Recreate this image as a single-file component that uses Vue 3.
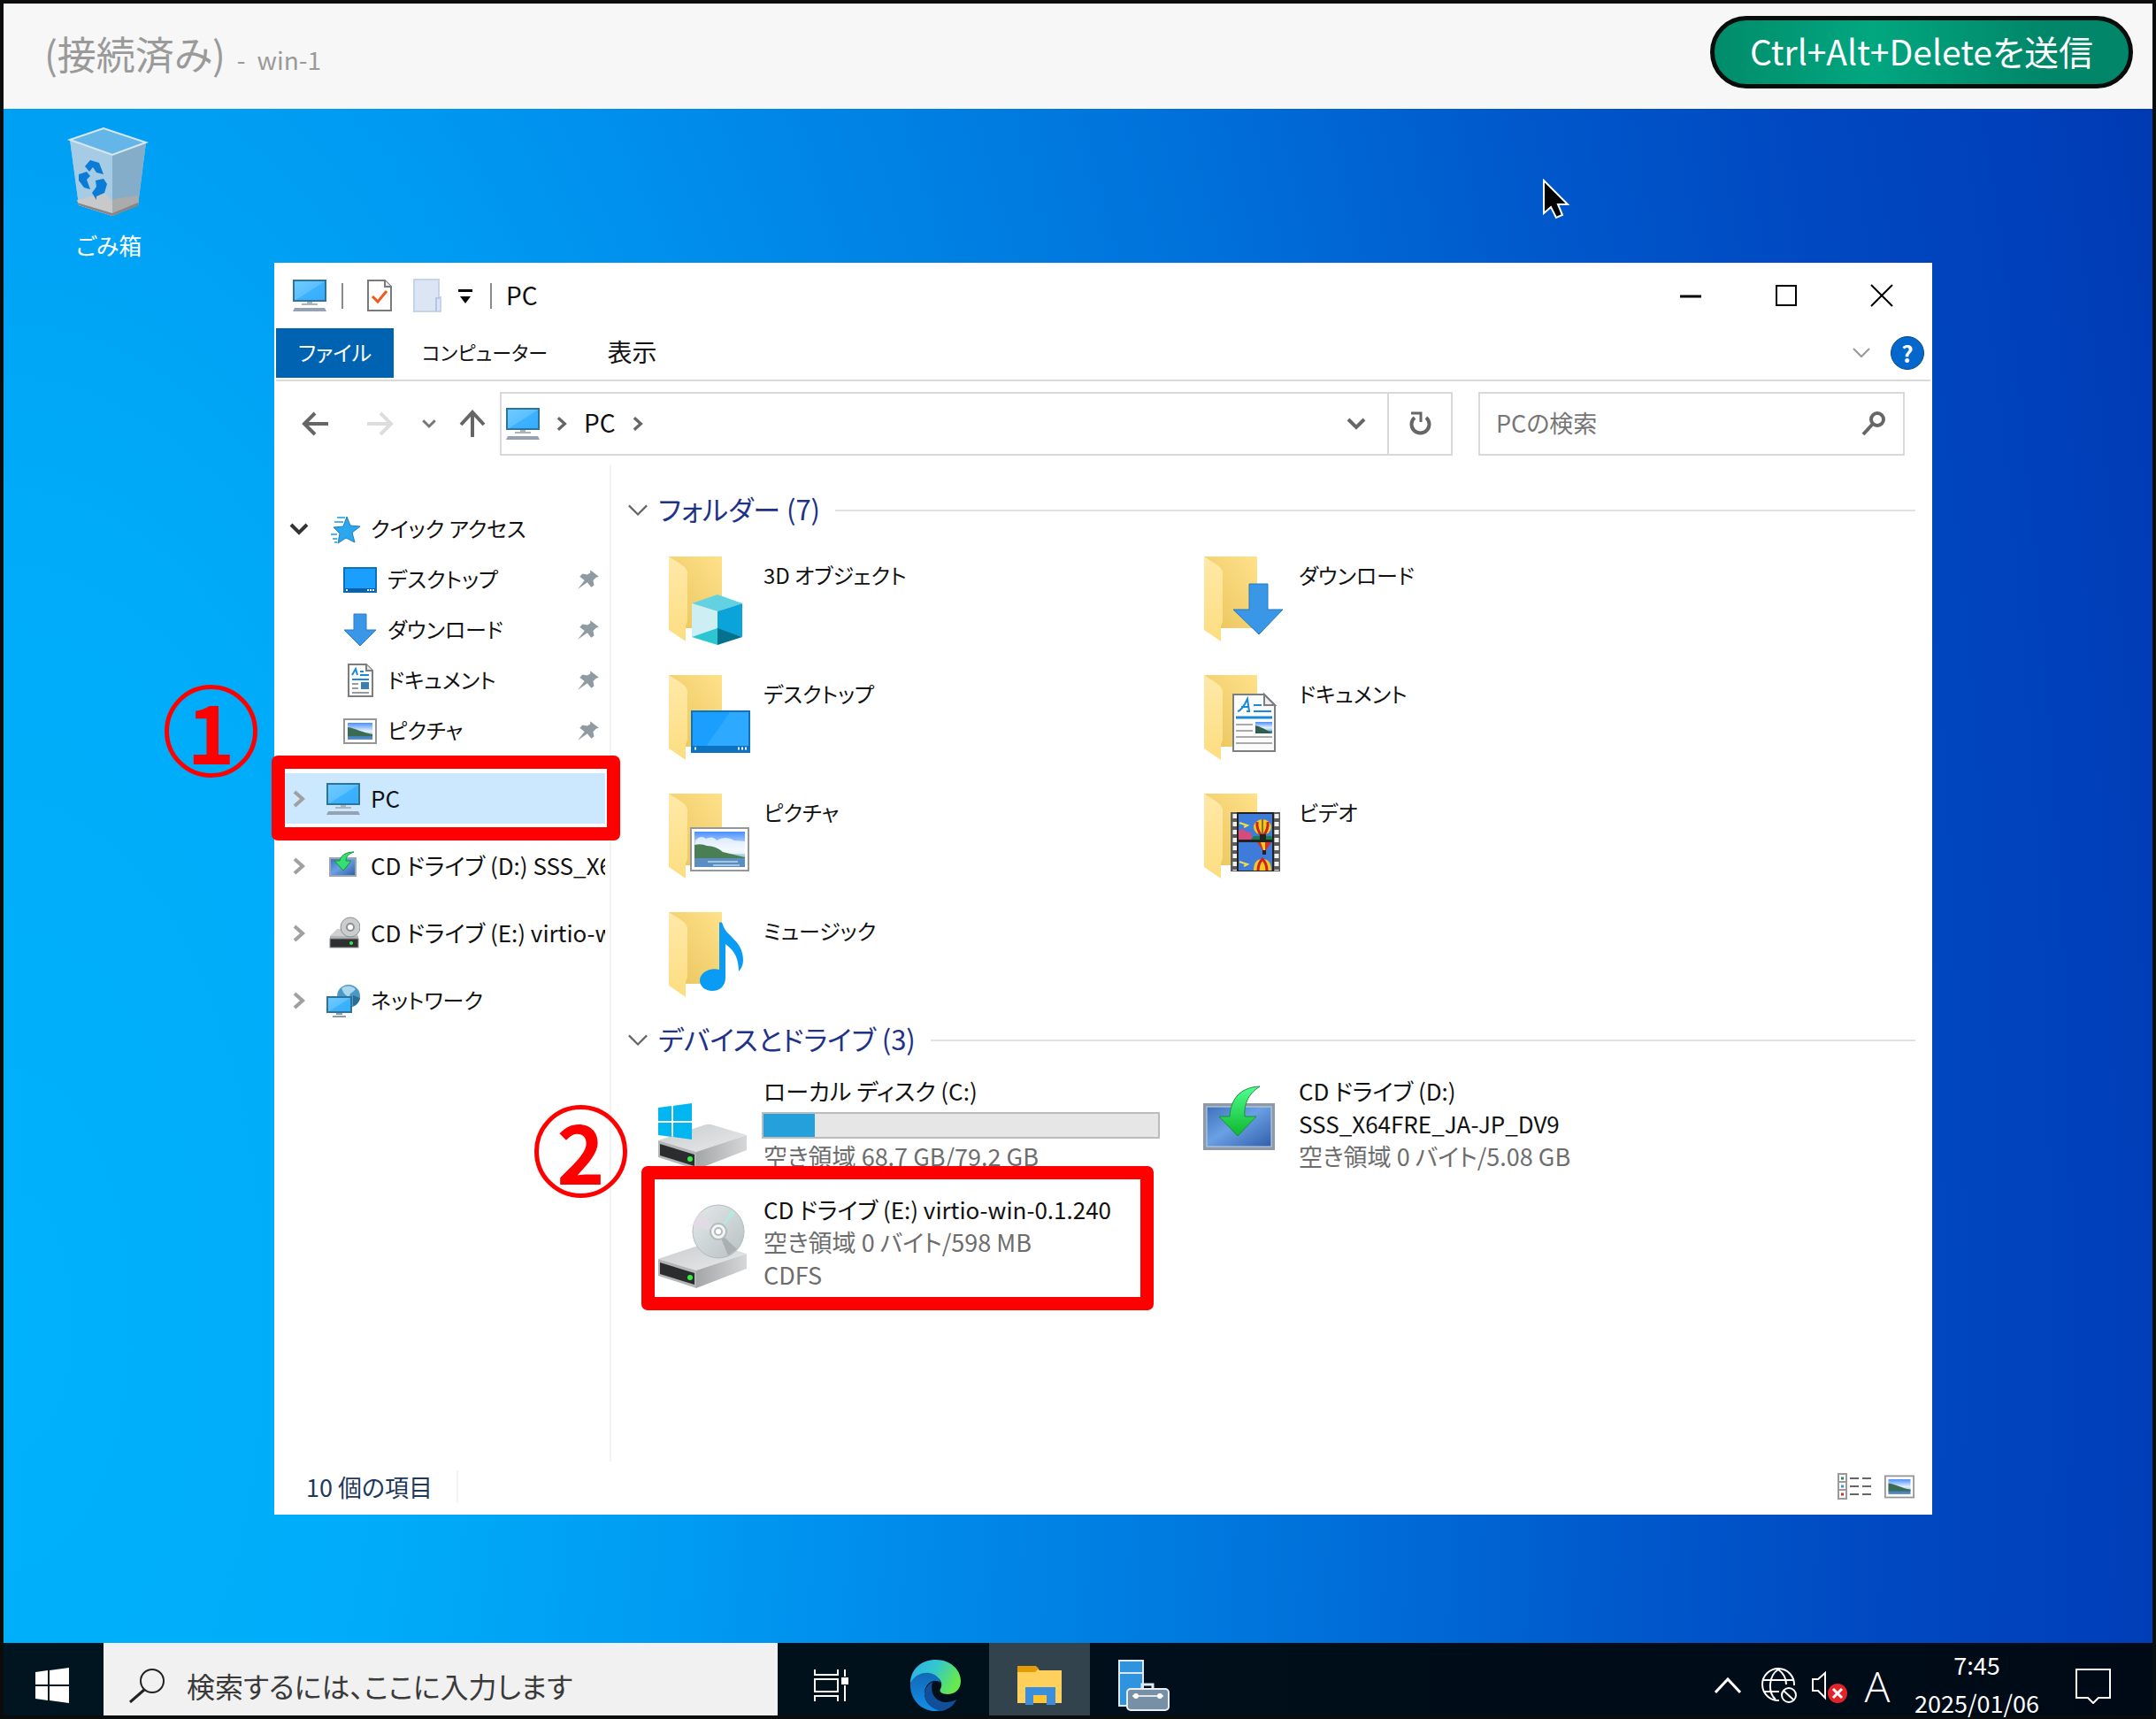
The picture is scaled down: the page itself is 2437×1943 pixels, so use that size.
<script setup>
const quickItems = [
  { label: 'デスクトップ', icon: 'i-desktop' },
  { label: 'ダウンロード', icon: 'i-download' },
  { label: 'ドキュメント', icon: 'i-document' },
  { label: 'ピクチャ', icon: 'i-picture' },
]

const treeItems = [
  { label: 'PC', icon: 'i-pc', selected: true },
  { label: 'CD ドライブ (D:) SSS_X64FRE_JA-JP_DV9', icon: 'i-setup' },
  { label: 'CD ドライブ (E:) virtio-win-0.1.240', icon: 'i-cd' },
  { label: 'ネットワーク', icon: 'i-network', kana: true },
]

const folders = [
  { label: '3D オブジェクト', icon: 'f-3d' },
  { label: 'ダウンロード', icon: 'f-download' },
  { label: 'デスクトップ', icon: 'f-desktop' },
  { label: 'ドキュメント', icon: 'f-document' },
  { label: 'ピクチャ', icon: 'f-picture' },
  { label: 'ビデオ', icon: 'f-video' },
  { label: 'ミュージック', icon: 'f-music' },
]

const drives = [
  { lines: ['ローカル ディスク (C:)'], used: 13, info: ['空き領域 68.7 GB/79.2 GB'], icon: 'd-local' },
  { lines: ['CD ドライブ (D:)', 'SSS_X64FRE_JA-JP_DV9'], info: ['空き領域 0 バイト/5.08 GB'], icon: 'd-setup' },
  { lines: ['CD ドライブ (E:) virtio-win-0.1.240'], info: ['空き領域 0 バイト/598 MB', 'CDFS'], icon: 'd-cd', step: 2 },
]
</script>

<template>
  <div class="console">
    <svg class="defs" width="0" height="0" aria-hidden="true">
      <defs>
        <linearGradient id="g-screen" x1="0" y1="0" x2="1" y2="1">
          <stop offset="0" stop-color="#6fcbff" />
          <stop offset="0.5" stop-color="#5cc0ff" />
          <stop offset="0.52" stop-color="#3db2ff" />
          <stop offset="1" stop-color="#35adfc" />
        </linearGradient>
        <linearGradient id="g-back" x1="0" y1="1" x2="1" y2="0">
          <stop offset="0" stop-color="#e9c45c" />
          <stop offset="1" stop-color="#ffe18a" />
        </linearGradient>
        <linearGradient id="g-flap" x1="0" y1="0" x2="0" y2="1">
          <stop offset="0" stop-color="#ffe9a8" />
          <stop offset="1" stop-color="#fcdd80" />
        </linearGradient>
        <linearGradient id="g-sky" x1="0" y1="0" x2="0" y2="1">
          <stop offset="0" stop-color="#4a8fff" />
          <stop offset="0.5" stop-color="#e4f1fc" />
          <stop offset="0.75" stop-color="#8fc0e0" />
          <stop offset="0.78" stop-color="#3f7ab5" />
          <stop offset="1" stop-color="#5f93c4" />
        </linearGradient>
        <linearGradient id="g-top" x1="0" y1="0" x2="1" y2="1">
          <stop offset="0" stop-color="#c9cbcc" />
          <stop offset="1" stop-color="#e9eaeb" />
        </linearGradient>
        <linearGradient id="g-side" x1="0" y1="0" x2="1" y2="0">
          <stop offset="0" stop-color="#a4a6a8" />
          <stop offset="1" stop-color="#d6d7d8" />
        </linearGradient>
        <linearGradient id="g-disc" x1="0" y1="0" x2="1" y2="1">
          <stop offset="0" stop-color="#e6eaea" />
          <stop offset="0.5" stop-color="#cdd5d6" />
          <stop offset="1" stop-color="#b9c0c2" />
        </linearGradient>
        <linearGradient id="g-blue" x1="0" y1="0" x2="1" y2="1">
          <stop offset="0" stop-color="#3a6fb8" />
          <stop offset="0.45" stop-color="#6aa0e4" />
          <stop offset="1" stop-color="#2d5aa8" />
        </linearGradient>
        <linearGradient id="g-green" x1="0" y1="0" x2="0" y2="1">
          <stop offset="0" stop-color="#4fff90" />
          <stop offset="1" stop-color="#0fb62c" />
        </linearGradient>
        <linearGradient id="g-edge1" x1="0" y1="0" x2="1" y2="0.4">
          <stop offset="0" stop-color="#2ab0ea" />
          <stop offset="0.5" stop-color="#33c7cf" />
          <stop offset="1" stop-color="#66e84f" />
        </linearGradient>
        <linearGradient id="g-edge2" x1="0" y1="0" x2="0" y2="1">
          <stop offset="0" stop-color="#1268b8" />
          <stop offset="1" stop-color="#128fe6" />
        </linearGradient>
      </defs>

      <symbol id="i-pc" viewBox="0 0 38 38">
        <rect x="1" y="2" width="36" height="23" fill="url(#g-screen)" stroke="#2f7399" stroke-width="2" />
        <path d="M16 26h6v2h6v2H10v-2h6z" fill="#a9b4bd" />
        <path d="M2 33h34l2 4H0z" fill="#94a2b3" />
      </symbol>
      <symbol id="i-star" viewBox="0 0 38 38">
        <path d="M23 5l4 10 11 1-9 7 3 11-10-5-9 6 2-11-7-7 11-1z" fill="#2ba6ef" stroke="#1c7fc0" stroke-width="1" />
        <path d="M12 6h9M9 11h10M5 25h7M7 30h5M9 34h3" stroke="#4fb4ee" stroke-width="2" />
      </symbol>
      <symbol id="i-desktop" viewBox="0 0 38 38">
        <rect x="1" y="6" width="36" height="27" fill="#1a9fff" stroke="#0c70bd" stroke-width="2" />
        <path d="M2 31h34" stroke="#0a5fa6" stroke-width="4" />
        <path d="M3 31h2M27 31h2M30 31h2M33 31h2" stroke="#fff" stroke-width="2" />
      </symbol>
      <symbol id="i-download" viewBox="0 0 38 38">
        <path d="M12 1h14v18h11L19 37 1 19h11z" fill="#3a97e8" stroke="#2c7dc4" stroke-width="1" />
      </symbol>
      <symbol id="i-document" viewBox="0 0 38 38">
        <path d="M6 1h20l7 7v29H6z" fill="#fff" stroke="#7d7d7d" stroke-width="2" />
        <path d="M26 1v7h7" fill="#e8e8e8" stroke="#7d7d7d" stroke-width="2" />
        <path d="M10 13l4-7 2 7M19 9h4M19 13h10M10 18h19" stroke="#1a8ad8" stroke-width="2" fill="none" />
        <path d="M10 23h7M10 28h7M10 33h19" stroke="#9a9a9a" stroke-width="2" />
        <rect x="20" y="21" width="9" height="8" fill="#3d7fae" />
      </symbol>
      <symbol id="i-picture" viewBox="0 0 38 38">
        <rect x="1" y="6" width="36" height="27" fill="#fff" stroke="#969696" stroke-width="2" />
        <rect x="5" y="10" width="28" height="19" fill="url(#g-sky)" />
        <path d="M5 15c9 1 16 6 28 8v2H5z" fill="#3c6b52" />
      </symbol>
      <symbol id="i-setup" viewBox="0 0 38 38">
        <rect x="4" y="10" width="29" height="20" fill="url(#g-blue)" stroke="#9aa6b5" stroke-width="2" />
        <path d="M31 3C22 3 16 7 15 13h-6l10 11 9-11h-6c0-5 3-8 9-10z" fill="#33e070" stroke="#15933a" stroke-width="1" />
      </symbol>
      <symbol id="i-cd" viewBox="0 0 38 38">
        <path d="M4 22l8-8h20l4 8z" fill="#cfd0d1" />
        <path d="M4 22h32v4H4z" fill="#b5b6b7" />
        <rect x="4" y="25" width="32" height="10" fill="#2f3031" stroke="#8a8a8a" stroke-width="1" />
        <circle cx="28" cy="30" r="2" fill="#2ff04a" />
        <ellipse cx="27" cy="12" rx="11" ry="11" fill="#cacdce" stroke="#8d9091" stroke-width="1" />
        <circle cx="27" cy="12" r="4" fill="#fff" stroke="#8d9091" stroke-width="2" />
      </symbol>
      <symbol id="i-network" viewBox="0 0 38 38">
        <circle cx="25" cy="14" r="13" fill="#4b9ac6" />
        <path d="M17 5c6-4 12-3 16 1-4 5-6 3-7 8-4 1-7-4-9-9z" fill="#a9d8ee" />
        <path d="M30 13l8 3c-1 5-4 8-8 9z" fill="#2c6d96" />
        <rect x="1" y="15" width="27" height="17" fill="url(#g-screen)" stroke="#2f7399" stroke-width="2" />
        <path d="M7 37h15M11 34h7" stroke="#8d9cab" stroke-width="2" />
      </symbol>
      <symbol id="i-pin" viewBox="0 0 24 24">
        <path d="M14 2l9 7-3 1-3 3 1 5-3 2-4-5-10 7 7-9-5-4 3-3 5 1 3-2z" fill="#8f9aa3" />
      </symbol>
      <symbol id="i-right" viewBox="0 0 16 24">
        <path d="M3 4l9 8-9 8" fill="none" stroke="currentColor" stroke-width="4" />
      </symbol>
      <symbol id="i-down" viewBox="0 0 24 16">
        <path d="M3 3l9 9 9-9" fill="none" stroke="currentColor" stroke-width="var(--w, 4)" />
      </symbol>

      <symbol id="f-base" viewBox="0 0 112 120">
        <path d="M16 9h60v81H30z" fill="url(#g-back)" />
        <path d="M16 9l14 9q7 5 7 10v54l-2 6v17L16 92z" fill="url(#g-flap)" />
      </symbol>
      <symbol id="f-3d" viewBox="0 0 112 120">
        <path d="M71 52l28 10-28 9-29-9z" fill="#62d2e2" />
        <path d="M42 62l29 9v20l-29 9z" fill="#cdeef2" />
        <path d="M99 62l-28 9v20l28 9z" fill="#0aa3da" />
        <path d="M42 100l29-10v19z" fill="#2cc5d2" />
        <path d="M99 100L71 90v19z" fill="#04718f" />
      </symbol>
      <symbol id="f-download" viewBox="0 0 112 120">
        <path d="M67 40h21v29h17L78 97 49 69h18z" fill="#3a97e8" stroke="#2478bf" stroke-width="1" />
      </symbol>
      <symbol id="f-desktop" viewBox="0 0 112 120">
        <rect x="42" y="50" width="65" height="46" fill="#1a9fff" stroke="#0e73be" stroke-width="2" />
        <path d="M85 51h21v39H58z" fill="#2daaff" />
        <path d="M43 92h63" stroke="#0d72bf" stroke-width="6" />
        <path d="M45 92h2M94 92h2M98 92h2M102 92h2" stroke="#fff" stroke-width="3" />
      </symbol>
      <symbol id="f-document" viewBox="0 0 112 120">
        <path d="M49 31h35l12 12v52H49z" fill="#fbfbfc" stroke="#7c7e80" stroke-width="2" />
        <path d="M84 31v12h12z" fill="#eee" stroke="#7c7e80" stroke-width="2" />
        <path d="M54 50q5-1 11-14l2 14M58 45h8M64 50h4" fill="none" stroke="#1a8ad8" stroke-width="2" />
        <path d="M72 43h9M72 50h20" stroke="#1a8ad8" stroke-width="2" />
        <path d="M52 57h41" stroke="#1a8ad8" stroke-width="3" />
        <path d="M52 65h19M52 72h19M52 79h41M52 86h41" stroke="#aaa" stroke-width="2" />
        <rect x="74" y="62" width="19" height="13" fill="url(#g-sky)" />
        <path d="M74 66q8 2 19 9H74z" fill="#2d5f4c" />
      </symbol>
      <symbol id="f-picture" viewBox="0 0 112 120">
        <rect x="41" y="48" width="65" height="48" fill="#fff" stroke="#959799" stroke-width="2" />
        <rect x="45" y="52" width="57" height="40" fill="url(#g-sky)" />
        <path d="M46 62q6-7 12-2 8-4 12 2 10-6 20 0l12 1v14H46z" fill="#f5f9fd" opacity="0.8" />
        <path d="M45 67q8-2 14 1 10 0 18 7l25 6v1H45z" fill="#4a7f55" />
        <path d="M45 82h57v10H45z" fill="#5a8dc0" />
        <path d="M60 86h34M66 90h30" stroke="#a5c6e2" stroke-width="2" />
      </symbol>
      <symbol id="f-video" viewBox="0 0 112 120">
        <rect x="46" y="30" width="56" height="67" fill="#5c5c5c" />
        <path d="M51 32v64M98 32v64" stroke="#f0f0f0" stroke-width="5" stroke-dasharray="5 4" />
        <rect x="53" y="30" width="42" height="67" fill="#222" />
        <path d="M55 32h38v29H55zM55 64h38v32H55z" fill="#3f7bd8" />
        <path d="M55 52q4-6 8 0l6 1 2 8H55z" fill="#d64a7c" />
        <path d="M72 57h21v4H69z" fill="#138047" />
        <path d="M56 42l9 3-4 2M56 86l9 3-4 2" fill="none" stroke="#f0dd4a" stroke-width="2" />
        <ellipse cx="82" cy="47" rx="10" ry="9" fill="#f2c722" />
        <path d="M76 41q-1 8 5 16M88 41q1 8-5 16" fill="none" stroke="#cc2222" stroke-width="3" />
        <path d="M82 38v19" stroke="#222" stroke-width="1" />
        <path d="M79 55h7v6h-7z" fill="#222" />
        <path d="M76 64h16l-6 9h-4z" fill="#d3302a" />
        <path d="M80 64h5v9h-2z" fill="#f0cf20" />
        <path d="M82 73h4v5h-4z" fill="#222" />
        <path d="M72 96q0-13 10-13t10 13z" fill="#f2c722" />
        <path d="M77 96q0-8 5-13 5 5 5 13" fill="none" stroke="#cc2222" stroke-width="3" />
      </symbol>
      <symbol id="f-music" viewBox="0 0 112 120">
        <path d="M73 21q3-2 4 2c3 13 23 18 23 40q0 8-5 13c0-20-9-26-15-31v38c0 9-6 15-15 15-8 0-14-5-14-12 0-8 11-15 22-12z" fill="#0a9bf5" />
      </symbol>

      <symbol id="d-body" viewBox="0 0 112 120">
        <path d="M4 86l54-18q4-1 9 1l37 11-57 19z" fill="url(#g-top)" />
        <path d="M47 99l57-19v17l-57 22z" fill="url(#g-side)" />
        <path d="M4 86l43 13v20L4 105z" fill="#b3b5b6" />
        <path d="M6 90l39 12v13L6 103z" fill="#2a2c2d" />
        <circle cx="40" cy="107" r="3" fill="#2ff03f" />
      </symbol>
      <symbol id="d-local" viewBox="0 0 112 120">
        <use href="#d-body" />
        <path d="M4 49l15-2v17H4zM21 47l21-3v20H21zM4 66h15v16L4 80zM21 66h21v19l-21-3z" fill="#00b7f1" />
      </symbol>
      <symbol id="d-cd" viewBox="0 0 112 120">
        <use href="#d-body" />
        <ellipse cx="72" cy="55" rx="29" ry="30" fill="url(#g-disc)" stroke="#b4babb" stroke-width="1" />
        <path d="M72 55L52 33q-7 6-9 16z" fill="#e0dbe4" />
        <path d="M72 55l15-25 4 4z" fill="#b5e8e0" />
        <path d="M72 55l11 27 10-7z" fill="#a9b0b2" />
        <circle cx="72" cy="55" r="9" fill="#f3f5f5" stroke="#b4babb" stroke-width="2" />
        <circle cx="72" cy="55" r="4" fill="#fff" stroke="#b4babb" stroke-width="2" />
      </symbol>
      <symbol id="d-setup" viewBox="0 0 112 120">
        <rect x="17" y="46" width="77" height="49" fill="url(#g-blue)" stroke="#8f9aa8" stroke-width="4" />
        <rect x="19" y="48" width="73" height="45" fill="none" stroke="#c6d3e4" stroke-width="1" />
        <path d="M79 25C56 26 46 40 45 59H33l21 22 21-22H62c-1-13 3-25 17-34z" fill="url(#g-green)" stroke="#1f8f3c" stroke-width="1" />
      </symbol>
    </svg>

    <header class="topbar">
      <h1 class="session"><span>(接続済み)</span><small>-</small><small>win-1</small></h1>
      <button class="send" type="button">Ctrl+Alt+Deleteを送信</button>
    </header>

    <main class="desktop">
      <a class="shortcut" href="#">
        <svg width="96" height="104" viewBox="0 0 96 104" aria-hidden="true">
          <path d="M4 15L42 2l48 16-9 71-29 12-38-12z" fill="#8fc3e6" />
          <path d="M4 15L42 2l48 16-38 14z" fill="#64b5e8" />
          <path d="M4 15l48 17v69L14 89z" fill="#a5cce4" />
          <path d="M90 18L52 32v69l29-12z" fill="#84adc9" />
          <path d="M12 83l32-8 8 10v16L14 89z" fill="#c8c9ca" />
          <path d="M52 82l30-4-1 11-29 12z" fill="#a9abad" />
          <path d="M12 86l40 12 29-12v4l-29 11-38-12z" fill="#85868a" />
          <path d="M4 15L42 2l48 16-38 14z" fill="none" stroke="#d8e6ee" stroke-width="2" />
          <path d="M21 45l6-7 10 3 5 13-8-2-4-6-4 5zM14 54l9-3 4 5-4 4 4 11-7-2-6-8zM33 61l9-2 4 6-3 10-9 4v4l-5-8 5-7z" fill="#0a7bd6" />
        </svg>
        <span>ごみ箱</span>
      </a>

      <svg class="cursor" width="32" height="46" viewBox="0 0 32 46" aria-hidden="true">
        <path d="M2 2v37l8-7 6 12 7-3-5-12h11z" fill="#000" stroke="#fff" stroke-width="2" />
      </svg>

      <section class="window">
        <div class="titlebar">
          <svg width="38" height="38"><use href="#i-pc" /></svg>
          <i class="bar first"></i>
          <svg class="props" width="30" height="38" viewBox="0 0 30 38">
            <path d="M2 2h19l7 7v27H2z" fill="#fff" stroke="#7a7a7a" stroke-width="2" />
            <path d="M21 2v7h7" fill="#eee" stroke="#7a7a7a" stroke-width="2" />
            <path d="M7 20l6 6 10-12" fill="none" stroke="#f0591a" stroke-width="3" />
          </svg>
          <svg class="newfolder" width="32" height="38" viewBox="0 0 32 38">
            <path d="M1 1h28v20h2v16H1z" fill="#dbe5f4" stroke="#c5d4ea" stroke-width="2" />
            <path d="M26 37V22h4" fill="none" stroke="#b4c6e2" stroke-width="2" />
          </svg>
          <svg class="more" width="20" height="20" viewBox="0 0 20 20">
            <path d="M2 3h16v3H2zM4 11h12l-6 8z" fill="#000" />
          </svg>
          <i class="bar second"></i>
          <h2>PC</h2>
          <div class="controls">
            <button type="button" aria-label="最小化"><svg width="26" height="26" viewBox="0 0 26 26"><path d="M1 14h24" stroke="#000" stroke-width="3" /></svg></button>
            <button type="button" aria-label="最大化"><svg width="26" height="26" viewBox="0 0 26 26"><rect x="2" y="2" width="22" height="22" fill="none" stroke="#000" stroke-width="2" /></svg></button>
            <button type="button" aria-label="閉じる"><svg width="26" height="26" viewBox="0 0 26 26"><path d="M1 1l24 24M25 1L1 25" stroke="#000" stroke-width="2" /></svg></button>
          </div>
        </div>

        <div class="tabs">
          <button class="tab file" type="button">ファイル</button>
          <button class="tab computer" type="button">コンピューター</button>
          <button class="tab view" type="button">表示</button>
          <button class="expand" type="button" aria-label="リボンの展開"><svg class="thin" width="24" height="16"><use href="#i-down" /></svg></button>
          <button class="help" type="button" aria-label="ヘルプ">?</button>
        </div>

        <div class="toolbar">
          <div class="nav-buttons">
            <button type="button" aria-label="戻る"><svg width="32" height="32" viewBox="0 0 32 32"><path d="M30 16H4M15 4L3 16l12 12" fill="none" stroke="#666" stroke-width="4" /></svg></button>
            <button class="forward" type="button" aria-label="進む" disabled><svg width="32" height="32" viewBox="0 0 32 32"><path d="M2 16h26M17 4l12 12-12 12" fill="none" stroke="#ddd" stroke-width="4" /></svg></button>
            <button class="history" type="button" aria-label="履歴"><svg width="18" height="12"><use href="#i-down" /></svg></button>
            <button class="parent" type="button" aria-label="上へ"><svg width="32" height="32" viewBox="0 0 32 32"><path d="M16 31V4M3 17L16 3l13 14" fill="none" stroke="#666" stroke-width="4" /></svg></button>
          </div>
          <div class="address">
            <svg width="38" height="38"><use href="#i-pc" /></svg>
            <svg class="sep" width="16" height="20"><use href="#i-right" /></svg>
            <a href="#">PC</a>
            <svg class="sep" width="16" height="20"><use href="#i-right" /></svg>
            <button class="drop" type="button" aria-label="以前の場所"><svg width="24" height="16"><use href="#i-down" /></svg></button>
            <button class="refresh" type="button" aria-label="更新">
              <svg width="30" height="30" viewBox="0 0 30 30"><path d="M9 8a10 10 0 1 0 13 0" fill="none" stroke="#666" stroke-width="4" /><path d="M5 3h11v10" fill="none" stroke="#666" stroke-width="3" /></svg>
            </button>
          </div>
          <div class="search">
            <input id="pc-search" type="text" placeholder="PCの検索" aria-label="PCの検索" />
            <svg width="30" height="30" viewBox="0 0 30 30" aria-hidden="true"><circle cx="19" cy="10" r="7" fill="none" stroke="#666" stroke-width="4" /><path d="M14 15L3 27" stroke="#666" stroke-width="4" /></svg>
          </div>
        </div>

        <div class="body">
          <nav class="tree">
            <ul>
              <li>
                <a class="node" href="#">
                  <svg class="twist open" width="24" height="16"><use href="#i-down" /></svg>
                  <svg width="38" height="38"><use href="#i-star" /></svg>
                  <span class="kana">クイック アクセス</span>
                </a>
              </li>
              <li v-for="item in quickItems" :key="item.label">
                <a class="node child" href="#">
                  <svg width="38" height="38"><use :href="'#' + item.icon" /></svg>
                  <span class="kana">{{ item.label }}</span>
                  <svg class="pin" width="26" height="26"><use href="#i-pin" /></svg>
                </a>
              </li>
            </ul>
            <ul class="roots">
              <li v-for="item in treeItems" :key="item.label">
                <a class="node" :class="{ selected: item.selected }" href="#">
                  <svg class="twist" width="16" height="24"><use href="#i-right" /></svg>
                  <svg width="38" height="38"><use :href="'#' + item.icon" /></svg>
                  <span :class="{ kana: item.kana }">{{ item.label }}</span>
                </a>
                <div v-if="item.selected" class="mark mark-tree"><b>1</b></div>
              </li>
            </ul>
          </nav>

          <div class="content">
            <section>
              <h3 class="group folders-head"><svg class="thin" width="28" height="18"><use href="#i-down" /></svg><span>フォルダー (7)</span></h3>
              <div class="tiles">
                <a v-for="item in folders" :key="item.label" class="tile" href="#">
                  <svg width="112" height="120" viewBox="0 0 112 120"><use href="#f-base" /><use :href="'#' + item.icon" /></svg>
                  <span class="text"><span class="kana">{{ item.label }}</span></span>
                </a>
              </div>
            </section>
            <section>
              <h3 class="group"><svg class="thin" width="28" height="18"><use href="#i-down" /></svg><span>デバイスとドライブ (3)</span></h3>
              <div class="tiles">
                <a v-for="item in drives" :key="item.icon" class="tile" href="#">
                  <svg width="112" height="120"><use :href="'#' + item.icon" /></svg>
                  <span class="text">
                    <span v-for="line in item.lines" :key="line">{{ line }}</span>
                    <span v-if="item.used" class="meter"><i :style="{ width: item.used + '%' }"></i></span>
                    <span v-for="line in item.info" :key="line" class="muted">{{ line }}</span>
                  </span>
                  <span v-if="item.step" class="mark mark-drive"><b>{{ item.step }}</b></span>
                </a>
              </div>
            </section>
          </div>
        </div>

        <footer class="status">
          <span class="count">10 個の項目</span>
          <button type="button" aria-label="詳細表示">
            <svg width="40" height="32" viewBox="0 0 40 32">
              <path d="M2 2h9v28H2zM2 11h9M2 20h9" fill="#fff" stroke="#9a9a9a" stroke-width="2" />
              <path d="M15 7h10M29 7h10M15 16h10M29 16h10M15 25h10M29 25h10" stroke="#666" stroke-width="2" />
              <path d="M5 7h3" stroke="#2d8a62" stroke-width="3" /><path d="M5 16h3" stroke="#3a8df0" stroke-width="3" /><path d="M5 25h3" stroke="#e02a2a" stroke-width="3" />
            </svg>
          </button>
          <button type="button" aria-label="大アイコン"><svg width="34" height="34"><use href="#i-picture" /></svg></button>
        </footer>
      </section>
    </main>

    <footer class="taskbar">
      <button class="start" type="button" aria-label="スタート">
        <svg width="40" height="40" viewBox="0 0 40 40"><path d="M1 5l14-2v16H1zM17 3l22-3v19H17zM1 21h14v16L1 35zM17 21h22v19l-22-3z" fill="#fff" /></svg>
      </button>
      <label class="find">
        <svg width="42" height="40" viewBox="0 0 42 40" aria-hidden="true"><circle cx="27" cy="15" r="13" fill="none" stroke="#222" stroke-width="2" /><path d="M18 25L2 39" stroke="#222" stroke-width="3" /></svg>
        <input type="text" placeholder="検索するには、ここに入力します" aria-label="検索" />
      </label>
      <div class="apps">
        <button type="button" aria-label="タスク ビュー">
          <svg width="42" height="40" viewBox="0 0 42 40"><path d="M3 2v6h26V2M3 38v-6h26v6M3 13h26v14H3zM37 2v8M37 20v18" fill="none" stroke="#fff" stroke-width="2" /><rect x="33" y="11" width="8" height="8" fill="#fff" /></svg>
        </button>
        <button type="button" aria-label="Edge">
          <svg width="58" height="58" viewBox="0 0 58 58">
            <path d="M1 27C1 10 14 0 30 0c16 0 28 11 28 24 0 10-7 15-15 15-6 0-10-3-8-6 3-5 1-13-9-15C14 15 5 19 1 27z" fill="url(#g-edge1)" />
            <path d="M1 27c3-8 12-13 21-12 8 1 12 6 13 11-7-6-18 1-18 12 0 10 8 18 20 19-20 5-37-10-36-30z" fill="url(#g-edge2)" />
            <path d="M26 25c-6 3-9 9-9 14 1 10 9 18 20 19 7-2 13-6 16-13-14 8-32 0-27-20z" fill="#124f9b" />
          </svg>
        </button>
        <button class="active" type="button" aria-label="エクスプローラー">
          <svg width="52" height="46" viewBox="0 0 52 46"><path d="M1 2h21l4 4h25v37H1z" fill="#ffd05c" /><path d="M1 1h21l3 3-4 4H1z" fill="#e39b06" /><path d="M10 25h34v20H34V34H19v11h-9z" fill="#3a8fdc" /><path d="M19 34h15v9H19z" fill="#ffc42f" /></svg>
        </button>
        <button type="button" aria-label="サーバー マネージャー">
          <svg width="60" height="60" viewBox="0 0 60 60"><path d="M2 2h27v51H2z" fill="#2f93dd" stroke="#dbe9f5" stroke-width="2" /><path d="M2 16h27" stroke="#dbe9f5" stroke-width="2" /><path d="M28 34v-5h12v5" fill="none" stroke="#dbe9f5" stroke-width="3" /><rect x="11" y="34" width="47" height="24" rx="4" fill="#7890a6" stroke="#e8eef4" stroke-width="2" /><path d="M17 42h35" stroke="#dfe6ec" stroke-width="2" /><circle cx="21" cy="42" r="3" fill="#fff" /><circle cx="48" cy="42" r="3" fill="#fff" /></svg>
        </button>
      </div>
      <div class="tray">
        <svg class="up" width="30" height="20" viewBox="0 0 30 20"><path d="M1 18L15 3l14 15" fill="none" stroke="#fff" stroke-width="3" /></svg>
        <svg class="globe" width="42" height="40" viewBox="0 0 42 40">
          <g fill="none" stroke="#fff" stroke-width="2"><path d="M38 20A18 18 0 1 0 21 37M17 36C8 28 9 9 20 2c7 5 9 11 9 17M12 3v0M3 14h35M3 27h18" /><circle cx="32" cy="31" r="8" /><path d="M26 26l11 10" /></g>
        </svg>
        <svg class="volume" width="42" height="40" viewBox="0 0 42 40"><path d="M2 13h6l8-7v28l-8-8H2z" fill="none" stroke="#fff" stroke-width="2" /><circle cx="30" cy="29" r="11" fill="#e3242b" /><path d="M25 24l10 10M35 24L25 34" stroke="#fff" stroke-width="3" /></svg>
        <span class="ime">A</span>
        <time class="clock"><span>7:45</span><span>2025/01/06</span></time>
        <svg class="notice" width="42" height="42" viewBox="0 0 42 42"><path d="M2 3h38v32H27l-6 6-6-6H2z" fill="none" stroke="#fff" stroke-width="2" /></svg>
      </div>
    </footer>
  </div>
</template>

<style>
body {
  margin: 0;
}
</style>

<style scoped>
* {
  box-sizing: border-box;
}
.console {
  display: flex;
  flex-direction: column;
  min-height: 100vh;
  border: 4px solid #0a0d0c;
  background: #f7f7f7;
  color: #111;
  font-family: "Noto Sans CJK JP", "Noto Sans", sans-serif;
  font-size: 26px;
  line-height: 37px;
  font-feature-settings: "palt";
}
button,
input {
  padding: 0;
  border: 0;
  background: none;
  color: inherit;
  font: inherit;
  font-feature-settings: inherit;
}
a {
  color: inherit;
  text-decoration: none;
}
svg {
  display: block;
  flex: none;
}
.defs {
  position: absolute;
}
h1,
h2,
h3,
ul {
  margin: 0;
  padding: 0;
  font-weight: 400;
  list-style: none;
}
.kana {
  font-size: 24px;
}

.topbar {
  display: flex;
  justify-content: space-between;
  align-items: flex-start;
  height: 119px;
  padding: 14px 22px 0 46px;
}
.session {
  display: flex;
  align-items: baseline;
  gap: 13px;
  padding-top: 14px;
  color: #9a9a9a;
  font-size: 44px;
  line-height: 56px;
}
.session small {
  font-size: 28px;
}
.send {
  width: 478px;
  height: 82px;
  padding-bottom: 4px;
  border: 5px solid #080c0b;
  border-radius: 41px;
  background: linear-gradient(90deg, #018c6a, #01a780 38%, #01866a 80%);
  color: #fff;
  font-size: 39px;
}

.desktop {
  position: relative;
  display: flex;
  flex: 1;
  padding: 174px 249px 145px 306px;
  background: radial-gradient(100% 280% at 0 79%, #00b1fb 0, #00acf9 18%, #009bf2 32%, #008aea 43%, #0076dd 58%, #0058cb 76%, #0048c1 88%, #0040ba 98%, #003ab2 104%);
}
.shortcut {
  position: absolute;
  top: 20px;
  left: 51px;
  width: 136px;
  display: flex;
  flex-direction: column;
  align-items: center;
  gap: 11px;
  color: #fff;
}
.cursor {
  position: absolute;
  top: 79px;
  left: 71.6%;
}

.window {
  display: flex;
  flex: 1;
  flex-direction: column;
  background: #fff;
}
.titlebar {
  display: flex;
  align-items: center;
  height: 74px;
  padding: 0 7px 0 21px;
}
.bar {
  width: 2px;
  height: 29px;
  background: #8a8a8a;
}
.bar.first {
  margin: 0 26px 0 17px;
}
.newfolder {
  margin: 0 17px 0 23px;
}
.bar.second {
  margin: 0 16px 0 18px;
}
.titlebar h2 {
  padding-bottom: 2px;
  font-size: 28px;
}
.controls {
  display: flex;
  margin-left: auto;
}
.controls button {
  display: grid;
  place-items: center;
  width: 108px;
  height: 60px;
}
.controls button:last-child {
  margin-right: -4px;
}

.tabs {
  display: flex;
  align-items: center;
  height: 60px;
  margin: 0 2px;
  padding-bottom: 2px;
  border-bottom: 2px solid #dadada;
}
.tab {
  height: 56px;
  padding-bottom: 3px;
  font-size: 24px;
}
.file {
  width: 133px;
  background: #0063b1;
  color: #fff;
}
.computer {
  width: 206px;
  font-size: 22px;
}
.view {
  width: 127px;
  font-size: 28px;
}
.expand {
  margin-left: auto;
  color: #999;
}
.thin {
  --w: 2;
}
.help {
  width: 38px;
  height: 38px;
  margin: 0 7px 0 21px;
  border: 1px solid #044c92;
  border-radius: 50%;
  background: #0467cb;
  color: #fff;
  font-weight: 700;
  line-height: 34px;
}

.toolbar {
  display: flex;
  padding: 12px 31px 10px 0;
}
.nav-buttons {
  display: flex;
  align-items: center;
  width: 255px;
  padding-left: 31px;
  color: #777;
}
.forward {
  margin-left: 40px;
}
.history {
  margin: 0 24px 0 31px;
}
.address {
  display: flex;
  flex: 1;
  align-items: center;
  height: 72px;
  padding-left: 5px;
  border: 2px solid #d9d9d9;
}
.address a {
  padding-bottom: 3px;
  font-size: 28px;
}
.sep {
  margin: 0 17px;
  color: #666;
}
.drop {
  margin: 0 23px 0 auto;
  color: #666;
}
.refresh {
  display: grid;
  place-items: center;
  width: 72px;
  height: 100%;
  border-left: 2px solid #d9d9d9;
}
.search {
  display: flex;
  align-items: center;
  width: 482px;
  height: 72px;
  margin-left: 29px;
  padding: 0 18px;
  border: 2px solid #d9d9d9;
}
.search input {
  flex: 1;
  min-width: 0;
  padding-bottom: 3px;
  font-size: 27px;
}
.search input::placeholder {
  color: #767676;
}

.body {
  display: flex;
  flex: 1;
}
.tree {
  width: 381px;
  padding: 44px 5px 0 12px;
  border-right: 2px solid #f3f3f3;
}
.node {
  display: flex;
  align-items: center;
  gap: 12px;
  height: 57px;
  padding-left: 8px;
}
.node span {
  flex: 1;
  padding-bottom: 3px;
  overflow: hidden;
  white-space: nowrap;
}
.twist {
  margin-right: 11px;
  color: #a0a0a0;
}
.twist.open {
  margin: 0 7px 0 -4px;
  color: #333;
}
.child {
  padding: 0 6px 0 66px;
}
.roots {
  display: flex;
  flex-direction: column;
  gap: 19px;
  margin-top: 20px;
}
.roots li {
  position: relative;
}
.selected {
  background: #cce8ff;
}
.mark {
  position: absolute;
  border: 15px solid #f00;
  border-radius: 7px;
  pointer-events: none;
}
.mark b {
  position: absolute;
  left: -136px;
  width: 105px;
  height: 105px;
  border: 5px solid #f00;
  border-radius: 50%;
  color: #f00;
  font-size: 92px;
  line-height: 90px;
  text-align: center;
}
.mark-tree {
  inset: -20px -17px -19px -15px;
}
.mark-tree b {
  top: -95px;
}
.mark-drive {
  inset: -19px 41px -10px -15px;
}
.mark-drive b {
  top: -84px;
}

.content {
  flex: 1;
  padding: 32px 19px 0 16px;
}
.group {
  display: flex;
  align-items: center;
  gap: 9px;
  height: 40px;
  margin-bottom: 7px;
  color: #1e3287;
  font-size: 31px;
}
.group span {
  padding-bottom: 5px;
}
.folders-head {
  margin-bottom: 23px;
}
.group svg {
  color: #666;
}
.group::after {
  flex: 1;
  height: 2px;
  margin-left: 8px;
  background: #e2e2e2;
  content: "";
}
.tiles {
  display: grid;
  grid-template-columns: repeat(auto-fill, 605px);
  grid-auto-rows: 134px;
  padding-left: 33px;
}
.tile {
  position: relative;
  display: flex;
  gap: 11px;
}
.text {
  display: flex;
  flex-direction: column;
  padding-top: 11px;
}
.muted {
  color: #6d6d6d;
  font-size: 27px;
}
.meter {
  width: 450px;
  height: 30px;
  margin: 6px 0 1px -2px;
  border: 2px solid #bcbcbc;
  background: #e6e6e6;
}
.meter i {
  display: block;
  height: 100%;
  background: #26a0da;
}

.status {
  display: flex;
  align-items: center;
  gap: 14px;
  height: 60px;
  padding: 0 20px 4px 36px;
  color: #1e395b;
  font-size: 27px;
}
.count {
  margin-right: auto;
  padding-right: 27px;
  border-right: 2px solid #f3f3f3;
}

.taskbar {
  display: flex;
  height: 82px;
  background: linear-gradient(90deg, #00151f, #000a17);
  color: #fff;
}
.start {
  display: grid;
  place-items: center;
  width: 113px;
  padding: 14px 4px 0 0;
}
.find {
  display: flex;
  align-items: center;
  width: 762px;
  padding: 14px 24px 0 28px;
  gap: 24px;
  background: #f1f1f1;
}
.find input {
  flex: 1;
  height: 56px;
  font-size: 32px;
}
.find input::placeholder {
  color: #3a3a3a;
}
.apps {
  display: flex;
  gap: 4px;
  margin-left: 3px;
}
.apps button {
  display: grid;
  place-items: center;
  width: 114px;
  padding-top: 14px;
}
.apps .active {
  background: #33434d;
}
.tray {
  display: flex;
  align-items: center;
  margin-left: auto;
  padding: 14px 46px 0 0;
}
.up {
  margin-right: 22px;
}
.globe {
  margin-right: 15px;
}
.volume {
  margin-right: 17px;
}
.ime {
  width: 32px;
  font-family: "Open Sans", sans-serif;
  font-size: 48px;
  font-weight: 300;
  text-align: center;
}
.clock {
  display: flex;
  flex-direction: column;
  align-items: center;
  margin: -14px 40px 0 26px;
  padding-top: 10px;
  font-size: 27px;
  line-height: 43px;
}
</style>
